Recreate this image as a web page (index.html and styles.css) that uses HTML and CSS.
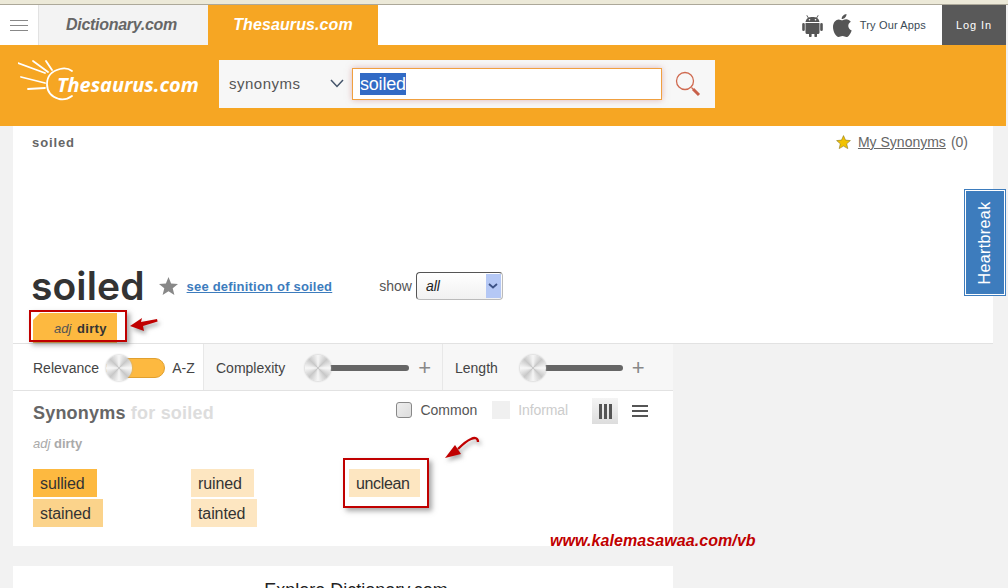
FILE: index.html
```html
<!DOCTYPE html>
<html lang="en">
<head>
<meta charset="utf-8">
<title>soiled | Thesaurus.com</title>
<link rel="stylesheet" href="styles.css">
</head>
<body>
<div class="chrome"></div>
<header class="topbar">
  <div class="menu"><span></span><span></span><span></span></div>
  <a class="tab tab-dict">Dictionary.com</a>
  <a class="tab tab-thes">Thesaurus.com</a>
  <div class="apps">
    <svg class="android" width="21" height="23" viewBox="0 0 21 23"><path fill="#555" d="M5 1l1.600 2.500A7 7 0 0 1 10.500 3a7 7 0 0 1 3.900.5L16 1l.6.4-1.500 2.500C16.500 5 17.300 6.300 17.500 8h-14c.2-1.700 1-3 2.400-4.100L4.400 1.400zM3.500 9h14v9.500a1.500 1.500 0 0 1-1.500 1.500h-1v2a1.300 1.300 0 0 1-2.600 0v-2h-2.800v2a1.300 1.300 0 0 1-2.600 0v-2H5a1.500 1.500 0 0 1-1.500-1.500zM.2 10.300a1.300 1.300 0 0 1 2.600 0v5.400a1.300 1.300 0 0 1-2.600 0zM18.200 10.300a1.300 1.300 0 0 1 2.600 0v5.400a1.300 1.300 0 0 1-2.600 0z"/><circle cx="7.500" cy="5.800" r=".8" fill="#fff"/><circle cx="13.500" cy="5.800" r=".8" fill="#fff"/></svg>
    <svg class="apple" width="19" height="23" viewBox="0 0 19 23"><path fill="#555" d="M13.500 0c.1 2.800-2.300 5.200-4.800 5C8.500 2.500 11 .2 13.500 0zM9 6.300c1 0 2.300-1.100 4.200-1.100 1.700 0 3.500.9 4.600 2.500-3.800 2.200-3.100 7.200.9 8.700-1 2.700-3 6.600-5.300 6.600-1.500 0-2.100-1-3.900-1s-2.500 1-3.900 1C3 23 0 17.500 0 13 0 8.200 3 5.400 5.700 5.400c1.500 0 2.600.9 3.300.9z"/></svg>
    <span class="apps-text">Try Our Apps</span>
  </div>
  <a class="login">Log In</a>
</header>
<section class="searchband">
  <div class="logo">
    <svg width="56" height="45" viewBox="0 0 56 45" class="sun"><g fill="none" stroke="#fff" stroke-width="1.800" stroke-linecap="round"><path d="M0 3l27 10M15 1l15 11M28 1l6 9M3 17l24 6M10 29l17-1"/><path d="M54 11c-4-3-8-3-12-2-8 2-13 7-13 15 0 8 5 13 12 15 5 1 9 0 13-3"/></g></svg>
    <span class="logo-text">Thesaurus.com</span>
  </div>
  <div class="searchbox">
    <div class="scope"><span>synonyms</span><svg width="14" height="9" viewBox="0 0 14 9"><path d="M1 1l6 6.500L13 1" fill="none" stroke="#44546a" stroke-width="1.500"/></svg></div>
    <div class="field"><span class="selected">soiled</span></div>
    <svg class="magnifier" width="26" height="26" viewBox="0 0 26 26"><circle cx="10" cy="10" r="8.500" fill="none" stroke="#cf6a50" stroke-width="1.300"/><path d="M16.500 16.500l1.500 1.500" stroke="#cf6a50" stroke-width="1.300"/><path d="M18 18l6 6" stroke="#c8604a" stroke-width="3"/></svg>
  </div>
</section>
<main class="page">
  <div class="card">
    <div class="crumbs">
      <span class="crumb">soiled</span>
      <div class="mysyn"><svg width="15" height="14" viewBox="0 0 15 14"><path fill="#f2c200" stroke="#8f7a20" stroke-width=".6" d="M7.500.6l2 4.500 4.900.5-3.700 3.200 1.100 4.800-4.300-2.500-4.300 2.500 1.100-4.800L.6 5.600l4.900-.5z"/></svg><a>My Synonyms</a><span class="count">(0)</span></div>
    </div>
    <div class="headline">
      <h1>soiled</h1>
      <svg class="bigstar" width="19" height="18" viewBox="0 0 19 18"><path fill="#888" d="M9.500 0l2.600 6.400 6.900.5-5.300 4.400 1.700 6.700-5.900-3.700L3.600 18l1.700-6.700L0 6.900l6.900-.5z"/></svg>
      <a class="deflink">see definition of soiled</a>
      <div class="show"><span>show</span><div class="select"><i>all</i><b><svg width="10" height="6" viewBox="0 0 10 6"><path d="M1 1l4 3.500L9 1" fill="none" stroke="#3d5285" stroke-width="1.800"/></svg></b></div></div>
    </div>
    <div class="sensetab"><i>adj</i> <b>dirty</b></div>
  </div>
  <div class="panel">
    <div class="filters">
      <div class="filter f1"><span>Relevance</span><div class="toggle"><div class="knob"></div></div><span>A-Z</span></div>
      <div class="filter f2"><span>Complexity</span><div class="slider"><div class="knob"></div></div><em>+</em></div>
      <div class="filter f3"><span>Length</span><div class="slider"><div class="knob"></div></div><em>+</em></div>
    </div>
    <div class="results">
      <div class="results-head">
        <h2>Synonyms <span>for soiled</span></h2>
        <div class="options">
          <span class="check"></span><span class="opt">Common</span>
          <span class="check off"></span><span class="opt faded">Informal</span>
          <span class="view active"><u></u><u></u><u></u></span>
          <span class="view rows"><u></u><u></u><u></u></span>
        </div>
      </div>
      <p class="sense"><i>adj</i> <b>dirty</b></p>
      <div class="words">
        <ul>
          <li class="w1">sullied</li>
          <li class="w2">stained</li>
        </ul>
        <ul>
          <li class="w3">ruined</li>
          <li class="w3">tainted</li>
        </ul>
        <ul>
          <li class="w3 w4">unclean</li>
        </ul>
      </div>
    </div>
  </div>
  <div class="explore">Explore Dictionary.com</div>
</main>
<aside class="heartbreak"><span>Heartbreak</span></aside>
<div class="mark box-a"></div>
<div class="mark box-b"></div>
<svg class="arrow arrow-a" width="34" height="20" viewBox="0 0 34 20"><path fill="#c00000" d="M1 9L13 1l-1 4 16-3 .6 2.500L14 9l1 5z" /></svg>
<svg class="arrow arrow-b" width="44" height="34" viewBox="0 0 44 34"><path fill="none" stroke="#c00000" stroke-width="2.300" d="M34 8c0-4-3-5-7-3-5 2-9 6-13 10"/><path fill="#c00000" d="M1 24l10-13 6 9z"/></svg>
<div class="watermark">www.kalemasawaa.com/vb</div>
</body>
</html>
```
FILE: styles.css
```css
* { box-sizing: border-box; }
html, body { margin: 0; padding: 0; }
body {
  width: 1008px;
  height: 588px;
  overflow: hidden;
  position: relative;
  background: #f2f2f2;
  font-family: "Liberation Sans", Arial, sans-serif;
  color: #333;
}
.chrome { height: 5px; background: #ece9d8; border-bottom: 1px solid #aca899; }
.topbar { height: 40px; width: 1006px; display: flex; background: #fff; }
.menu {
  width: 39px;
  border-right: 1px solid #e2e2e2;
  display: flex;
  flex-direction: column;
  justify-content: center;
  gap: 4px;
  padding: 0 10px;
}
.menu span { height: 1px; background: #888; display: block; }
.tab {
  width: 170px;
  display: flex;
  align-items: center;
  justify-content: center;
  font-size: 16px;
  font-weight: bold;
  font-style: italic;
}
.tab-dict { width: 169px; background: #f3f3f3; color: #666; letter-spacing: -.3px; padding-right: 4px; }
.tab-thes { background: #f6a623; color: #fff; letter-spacing: .1px; }
.apps {
  margin-left: auto;
  display: flex;
  align-items: center;
  padding-right: 16px;
}
.android { margin-right: 10px; }
.apple { margin-right: 8px; }
.apps-text { font-size: 11px; color: #3a4a55; letter-spacing: .15px; }
.login {
  width: 64px;
  background: #595959;
  color: #fff;
  font-size: 11px;
  letter-spacing: .9px;
  display: flex;
  align-items: center;
  justify-content: center;
}
.searchband {
  width: 1006px;
  height: 81px;
  background: #f6a623;
  display: flex;
  align-items: flex-start;
  padding-top: 15px;
}
.logo {
  width: 219px;
  height: 45px;
  display: flex;
  align-items: center;
  padding-left: 18px;
}
.sun { flex: none; }
.logo-text {
  margin-left: -17px;
  margin-top: 3px;
  color: #fff;
  font-family: "Open Sans", sans-serif;
  font-weight: 700;
  font-style: italic;
  font-size: 20px;
  letter-spacing: -.05px;
}
.searchbox {
  width: 496px;
  height: 48px;
  background: #f7f7f7;
  display: flex;
  align-items: center;
}
.scope {
  width: 133px;
  padding: 0 8px 2px 10px;
  display: flex;
  align-items: center;
  justify-content: space-between;
  font-size: 15px;
  letter-spacing: .5px;
  color: #555;
}
.field {
  width: 310px;
  height: 32px;
  background: #fff;
  border: 1px solid #f0a040;
  box-shadow: 0 0 6px rgba(200, 120, 120, .5);
  padding: 0 0 0 7px;
  display: flex;
  align-items: center;
  font-size: 18px;
  letter-spacing: -.2px;
  color: #fff;
}
.selected { background: #316ac5; height: 22px; line-height: 22px; color: #fff; }
.magnifier { margin-left: 13px; }
.page { width: 993px; padding-left: 13px; }
.card {
  background: #fff;
  height: 218px;
  width: 980px;
  padding: 9px 19px 0;
  border-bottom: 1px solid #e2e2e2;
  display: flex;
  flex-direction: column;
}
.crumbs { display: flex; justify-content: space-between; align-items: center; height: 14px; padding-right: 6px; }
.crumb { font-size: 13px; font-weight: bold; color: #666; letter-spacing: .9px; }
.mysyn { display: flex; align-items: center; font-size: 14px; color: #666; }
.mysyn a { margin: 0 5px 0 7px; text-decoration: underline; }
.headline { display: flex; align-items: center; height: 40px; margin-top: 117px; }
h1 {
  margin: 0 0 0 -1px;
  font-family: Inter, sans-serif;
  font-size: 39px;
  font-weight: 600;
  color: #333;
  letter-spacing: .1px;
  position: relative;
  top: -1px;
}
.bigstar { margin-left: 14px; }
.deflink {
  margin: 1px 0 0 9px;
  font-size: 13px;
  font-weight: bold;
  color: #3d7cbd;
  text-decoration: underline;
  letter-spacing: .2px;
}
.show { display: flex; align-items: center; margin-left: 47px; font-size: 14px; color: #555; }
.select {
  margin-left: 4px;
  width: 87px;
  height: 28px;
  border: 1px solid #bbb;
  border-left-color: #555;
  border-top-color: #555;
  border-radius: 4px;
  background: linear-gradient(#fff, #f1f1f1);
  display: flex;
  justify-content: space-between;
  padding: 1px 1px 1px 9px;
  font-size: 14px;
  color: #222;
  align-items: stretch;
}
.select i { align-self: center; }
.select b {
  width: 15px;
  background: #b5c8f5;
  display: flex;
  align-items: center;
  justify-content: center;
}
.sensetab {
  margin: 7px 0 0 1px;
  width: 84px;
  height: 30px;
  background: #fdb940;
  clip-path: polygon(7px 0, 100% 0, 100% 100%, 0 100%, 0 7px);
  font-size: 13px;
  line-height: 32px;
  padding-left: 21px;
  color: #555;
}
.sensetab b { color: #333; margin-left: 2px; letter-spacing: .3px; }
.panel { width: 660px; background: #fff; }
.filters {
  display: flex;
  height: 47px;
  background: #f7f7f7;
  border-bottom: 1px solid #e2e2e2;
  font-size: 14px;
  color: #444;
}
.filter { display: flex; align-items: center; border-right: 1px solid #e8e8e8; padding-left: 20px; padding-top: 1px; }
.f1 { width: 191px; background: #fff; }
.f2 { width: 239px; padding-left: 12px; }
.f3 { width: 230px; padding-left: 12px; border-right: 0; }
.toggle {
  width: 59px;
  height: 20px;
  margin: 0 7px;
  border-radius: 10px;
  background: #fdb940;
  border: 1px solid #e0a030;
  position: relative;
}
.knob {
  position: absolute;
  left: -1px;
  top: -4px;
  width: 26px;
  height: 26px;
  border-radius: 50%;
  background: conic-gradient(#f6f6f6, #c8c8c8, #f8f8f8, #c8c8c8, #f6f6f6, #c8c8c8, #f8f8f8, #c8c8c8, #f6f6f6);
  box-shadow: 0 0 2px #aaa;
}
.slider {
  position: relative;
  height: 6px;
  border-radius: 3px;
  background: #666;
  margin-left: 32px;
  width: 92px;
}
.f3 .slider { margin-left: 34px; width: 91px; }
.slider .knob { left: -12px; top: -10px; }
.filter em { font-style: normal; font-size: 22px; font-weight: 300; color: #888; margin-left: 9px; line-height: 1; }
.results { height: 155px; padding: 11px 20px 0; }
.results-head { display: flex; justify-content: space-between; align-items: flex-start; height: 25px; }
h2 { margin: 0; font-size: 18px; font-weight: bold; color: #666; letter-spacing: .2px; line-height: 22px; }
h2 span { color: #ddd; }
.options { display: flex; align-items: center; font-size: 14px; color: #555; margin-top: -6px; height: 28px; }
.check {
  width: 16px;
  height: 16px;
  border: 1px solid #888;
  border-radius: 3px;
  background: linear-gradient(135deg, #eee, #ddd);
  margin-right: 8px;
}
.check.off { width: 18px; height: 18px; border: 0; border-radius: 0; background: #f0f0f0; margin-right: 8px; }
.opt { margin-right: 15px; }
.opt.faded { color: #ccc; margin-right: 24px; letter-spacing: -.1px; }
.view { width: 26px; height: 26px; margin-top: 2px; display: flex; align-items: center; justify-content: center; gap: 2px; }
.view u { display: block; width: 3px; height: 15px; background: #555; }
.view.active { background: linear-gradient(#f4f4f4, #ddd); margin-right: 13px; }
.view.rows { flex-direction: column; gap: 3px; width: 17px; margin-right: 5px; }
.view.rows u { width: 16px; height: 2px; }
.sense { margin: 9px 0 0; font-size: 13px; color: #aaa; }
.words { display: flex; margin-top: 18px; }
.words ul { list-style: none; margin: 0; padding: 0; width: 158px; display: flex; flex-direction: column; gap: 2px; align-items: flex-start; }
.words li { height: 28px; line-height: 30px; padding: 0 7px; font-size: 16px; letter-spacing: -.1px; color: #333; }
.words ul + ul li { padding-right: 12px; }
.words .w1 { background: #fdb940; padding-right: 12px; }
.words .w2 { background: #fbd38b; padding-right: 12px; }
.words .w3 { background: #fde6c1; }
.words ul + ul .w4 { padding-right: 10px; letter-spacing: -.35px; }
.explore {
  width: 660px;
  margin-top: 20px;
  height: 30px;
  background: #fff;
  font-size: 18px;
  color: #222;
  text-align: center;
  padding: 14px 0 0 26px;
}
.heartbreak {
  position: absolute;
  left: 964px;
  top: 189px;
  width: 42px;
  height: 107px;
  background: #3d7cbd;
  border: 1px solid #3d7cbd;
  outline: 1px solid #fff;
  outline-offset: -2px;
  display: flex;
  align-items: center;
  justify-content: center;
}
.heartbreak span { transform: rotate(-90deg); color: #fff; font-size: 16px; white-space: nowrap; letter-spacing: .4px; }
.mark { position: absolute; border: 2px solid #c00000; box-shadow: 3px 3px 5px rgba(80, 80, 80, .5); }
.box-a { left: 29px; top: 310px; width: 98px; height: 32px; }
.box-b { left: 343px; top: 458px; width: 86px; height: 50px; }
.arrow { position: absolute; filter: drop-shadow(2px 3px 2px rgba(80, 80, 80, .5)); }
.arrow-a { left: 129px; top: 317px; }
.arrow-b { left: 444px; top: 434px; }
.watermark {
  position: absolute;
  left: 550px;
  top: 532px;
  font-size: 16px;
  font-weight: bold;
  font-style: italic;
  color: #c00000;
  letter-spacing: .08px;
}
```
